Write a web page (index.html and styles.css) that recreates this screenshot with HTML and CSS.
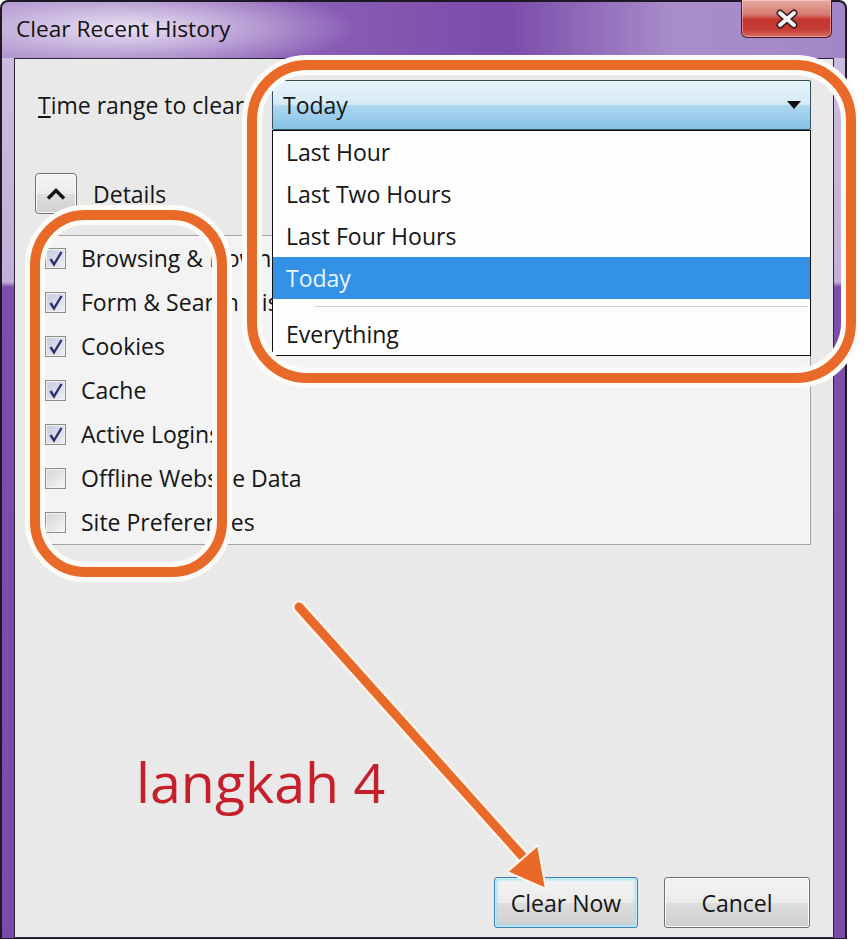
FILE: index.html
```html
<!DOCTYPE html>
<html lang="en">
<head>
<meta charset="UTF-8" />
<title>Clear Recent History</title>
<link rel="stylesheet" href="styles.css">
</head>
<body>

<div class="window">
  <div class="titlebar">
    <span class="title">Clear Recent History</span>
    <button class="close-btn" aria-label="Close">
      <svg width="26" height="20" viewBox="0 0 26 20">
        <path d="M6 4 L20 16 M20 4 L6 16" stroke="#3b2222" stroke-width="7" stroke-linecap="round" />
        <path d="M6 4 L20 16 M20 4 L6 16" stroke="#f4f4f4" stroke-width="4" stroke-linecap="round" />
      </svg>
    </button>
  </div>

  <div class="client">
    <div class="range-row">
      <label class="range-label"><u>T</u>ime range to clear</label>
      <div class="combo">
        <span>Today</span>
        <span class="combo-arrow"></span>
      </div>
    </div>

    <div class="details-row">
      <button class="details-btn" aria-label="Hide details">
        <svg width="22" height="14" viewBox="0 0 22 14">
          <polyline points="3,11.5 11,3.5 19,11.5" fill="none" stroke="#151515" stroke-width="3.4" />
        </svg>
      </button>
      <span>D<u>e</u>tails</span>
    </div>

    <ul class="items">
      <li class="item"><span class="check on"><svg width="17" height="17" viewBox="0 0 17 17"><path d="M3.5 9 L7 14.5 L14.5 2" fill="none" stroke="#283272" stroke-width="2.4" /></svg></span>Browsing &amp; Download History</li>
      <li class="item"><span class="check on"><svg width="17" height="17" viewBox="0 0 17 17"><path d="M3.5 9 L7 14.5 L14.5 2" fill="none" stroke="#283272" stroke-width="2.4" /></svg></span>Form &amp; Search History</li>
      <li class="item"><span class="check on"><svg width="17" height="17" viewBox="0 0 17 17"><path d="M3.5 9 L7 14.5 L14.5 2" fill="none" stroke="#283272" stroke-width="2.4" /></svg></span>Cookies</li>
      <li class="item"><span class="check on"><svg width="17" height="17" viewBox="0 0 17 17"><path d="M3.5 9 L7 14.5 L14.5 2" fill="none" stroke="#283272" stroke-width="2.4" /></svg></span>Cache</li>
      <li class="item"><span class="check on"><svg width="17" height="17" viewBox="0 0 17 17"><path d="M3.5 9 L7 14.5 L14.5 2" fill="none" stroke="#283272" stroke-width="2.4" /></svg></span>Active Logins</li>
      <li class="item"><span class="check"></span>Offline Website Data</li>
      <li class="item"><span class="check"></span>Site Preferences</li>
    </ul>

    <div class="actions">
      <button class="btn btn-default">Clear Now</button>
      <button class="btn">Cancel</button>
    </div>

    <!-- open list of the time range select -->
    <ul class="dropdown">
      <li>Last Hour</li>
      <li>Last Two Hours</li>
      <li>Last Four Hours</li>
      <li class="selected">Today</li>
      <li class="sep"></li>
      <li>Everything</li>
    </ul>
  </div>
</div>

<svg class="marks" width="864" height="940" viewBox="0 0 864 940">
  <g fill="none" stroke-linecap="round" stroke-linejoin="round">
    <g stroke="#fdfbf8" stroke-width="20">
      <rect x="35" y="215" width="187" height="357" rx="50" />
      <rect x="252" y="65" width="599" height="313" rx="55" />
    </g>
    <path d="M299 607 L524 858" stroke="#fbf3ec" stroke-width="14" />
    <g stroke="#e96a28" stroke-width="10">
      <rect x="35" y="215" width="187" height="357" rx="50" />
      <rect x="252" y="65" width="599" height="313" rx="55" />
    </g>
    <path d="M299 607 L524 858" stroke="#e96a28" stroke-width="9" />
  </g>
  <polygon points="546,889 507,872 538,845" fill="#e96a28" stroke="#fbf3ec" stroke-width="2" stroke-linejoin="round" />
</svg>

<div class="note">langkah 4</div>

</body>
</html>
```

FILE: styles.css
```css
* {
  box-sizing: border-box;
}
body {
  margin: 0;
  width: 864px;
  height: 940px;
  position: relative;
  overflow: hidden;
  background: #fff;
  color: #151515;
  font-family: 'Open Sans', 'Segoe UI', sans-serif;
  font-size: 23px;
}
ul {
  list-style: none;
  margin: 0;
  padding: 0;
}
button {
  font-family: inherit;
  font-size: inherit;
  color: inherit;
  padding: 0;
}

/* window frame */
.window {
  width: 847px;
  height: 939px;
  display: flex;
  flex-direction: column;
  padding: 0 11px 0 12px;
  border: 2px solid #1d1726;
  border-bottom-width: 1px;
  border-radius: 8px 8px 0 0;
  background:
    radial-gradient(ellipse 230px 44px at 125px 26px, rgba(238, 231, 246, 0.95), rgba(238, 231, 246, 0)),
    linear-gradient(90deg, #a688c8 0, #8a5eb6 36%, #7b4caa 60%, #a98ecb 80%, #a386c7 100%) top / 100% 56px no-repeat,
    linear-gradient(180deg, #cdbde0 0, #c3afd9 280px, #7c4daa 285px, #7a4ba8 100%);
}
.titlebar {
  height: 56px;
  flex: none;
  display: flex;
  justify-content: space-between;
  align-items: flex-start;
}
.title {
  padding: 12px 0 0 2px;
  line-height: 30px;
  font-size: 22.7px;
  color: #121212;
}
.close-btn {
  width: 91px;
  height: 38px;
  margin: -2px 2px 0 0;
  display: grid;
  place-items: center;
  border: 1px solid #43201f;
  border-top: none;
  border-radius: 0 0 6px 6px;
  background: linear-gradient(180deg, #e4aaa3 0, #d87a70 40%, #c5362d 52%, #c43a32 78%, #d86c63 100%);
  box-shadow: inset 0 0 0 1px rgba(255, 220, 215, 0.45);
}

/* dialog body */
.client {
  flex: 1;
  position: relative;
  display: flex;
  flex-direction: column;
  background: #e9e9e9;
  border: 1px solid #2b2536;
}
.range-row {
  display: flex;
  align-items: center;
  margin-top: 21px;
  padding: 0 22px 0 23px;
  line-height: 30px;
}
.combo {
  width: 539px;
  height: 50px;
  margin-left: auto;
  display: flex;
  align-items: center;
  padding-left: 10px;
  border: 1px solid #34505f;
  border-radius: 2px;
  background: linear-gradient(180deg, #e8f4fa 0, #d5ebf6 48%, #acd7ef 52%, #86c2e4 100%);
}
.combo-arrow {
  margin: 0 9px 0 auto;
  border-left: 7px solid transparent;
  border-right: 7px solid transparent;
  border-top: 8px solid #111;
}
.details-row {
  display: flex;
  align-items: center;
  gap: 16px;
  margin: 43px 0 0 20px;
  line-height: 30px;
}
.details-btn {
  width: 42px;
  height: 41px;
  display: grid;
  place-items: center;
  border: 1px solid #707070;
  border-radius: 4px;
  background: linear-gradient(180deg, #f6f6f6 0, #ececec 50%, #dedede 51%, #d2d2d2 100%);
  box-shadow: inset 0 0 0 1px #fbfbfb;
}

/* checkbox list */
.items {
  margin: 21px 22px 0 18px;
  border: 1px solid #a3a3a3;
  background: #f3f3f3;
}
.item {
  height: 44px;
  display: flex;
  align-items: center;
  gap: 15px;
  padding-left: 11px;
  white-space: nowrap;
}
.check {
  width: 21px;
  height: 21px;
  flex: none;
  display: grid;
  place-items: center;
  border: 1px solid #8e8e8e;
  background: linear-gradient(135deg, #d3d3d3, #f7f7f7);
  box-shadow: inset 0 0 0 1px #f2f2f2;
}
.check.on {
  background: linear-gradient(135deg, #c7c9de, #eeeef6);
}

/* buttons */
.actions {
  margin-top: auto;
  display: flex;
  justify-content: flex-end;
  gap: 26px;
  padding: 0 23px 9px 0;
}
.btn {
  width: 146px;
  height: 51px;
  border: 1px solid #707070;
  border-radius: 3px;
  background: linear-gradient(180deg, #f3f3f3 0, #ebebeb 50%, #dddddd 51%, #cfcfcf 100%);
  box-shadow: inset 0 0 0 1px #fcfcfc;
}
.btn-default {
  width: 144px;
  border-color: #3c7fb1;
  box-shadow: inset 0 0 0 1px #bfeefc, inset 0 0 3px 2px #9fdff2;
}

/* open select list, drawn over the checkbox list */
.dropdown {
  position: absolute;
  left: 257px;
  top: 71px;
  width: 539px;
  background: #fdfdfd;
  border: 1px solid #111;
}
.dropdown li {
  height: 42px;
  line-height: 42px;
  padding-left: 13px;
}
.dropdown .selected {
  background: #3492e6;
  color: #e8f6ff;
}
.dropdown .sep {
  height: 1px;
  margin: 7px 2px 6px 42px;
  padding: 0;
  background: #cfcfcf;
}

/* annotations drawn over the screenshot */
.marks {
  position: absolute;
  left: 0;
  top: 0;
  pointer-events: none;
}
.note {
  position: absolute;
  left: 136px;
  top: 754px;
  font-size: 55.5px;
  line-height: 1;
  color: #c51f2b;
}
```
